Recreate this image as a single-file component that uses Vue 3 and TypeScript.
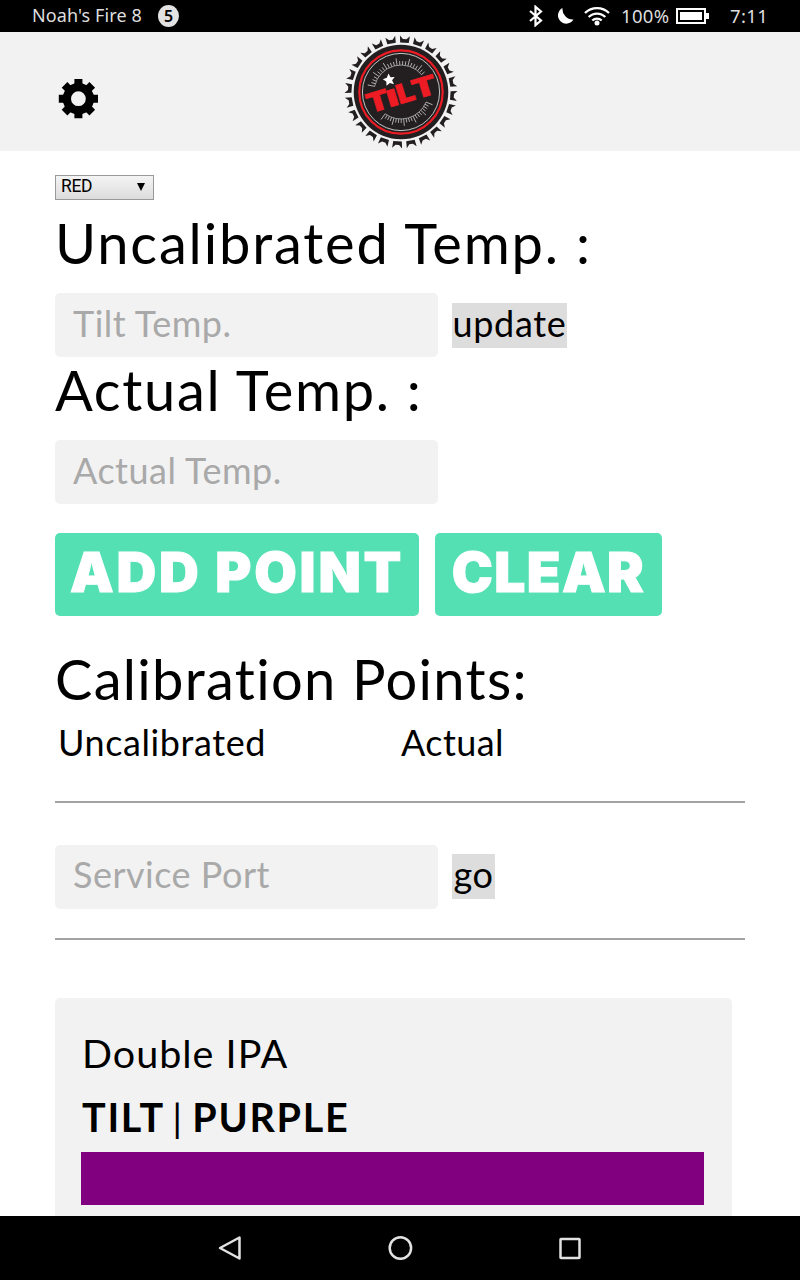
<script setup lang="ts">
import { ref } from 'vue';

interface Tick {
  angle: number;
  length: number;
}

const colors = ['RED', 'GREEN', 'BLACK', 'PURPLE', 'ORANGE', 'BLUE', 'YELLOW', 'PINK'];

const selectedColor = ref('RED');
const uncalibratedTemp = ref('');
const actualTemp = ref('');
const servicePort = ref('');

const capTeeth = Array.from({ length: 24 }, (_, i) => 4 + i * 15);
const gearTeeth = Array.from({ length: 8 }, (_, i) => i * 45);

const makeTicks = (from: number, to: number, step: number): Tick[] => {
  const ticks: Tick[] = [];
  for (let angle = from, i = 0; angle <= to; angle += step, i++) {
    ticks.push({ angle, length: i % 4 === 0 ? 7 : 4 });
  }
  return ticks;
};

const dialTicks = [...makeTicks(-78, 50, 5.8), ...makeTicks(112, 216, 5.2)];

const clearPoints = () => {
  uncalibratedTemp.value = '';
  actualTemp.value = '';
};
</script>

<template>
  <div class="screen">
    <div class="status">
      <span class="status__device">Noah's Fire 8</span>
      <span class="status__count">5</span>
      <div class="status__right">
        <svg class="status__bluetooth" width="16" height="22" viewBox="0 0 16 22">
          <path d="M2 6l11 9.500-5.500 4.700V1.800L13 6.500 2 16" fill="none" stroke="#fff" stroke-width="2.200" />
        </svg>
        <svg class="status__moon" width="17" height="18" viewBox="0 0 17 18">
          <path d="M5.500 1A8.300 8.300 0 1 0 16.500 12.500 10.500 10.500 0 0 1 5.500 1z" fill="#fff" />
        </svg>
        <svg class="status__wifi" width="26" height="20" viewBox="0 0 26 20">
          <g fill="none" stroke="#fff" stroke-width="2.300">
            <path d="M1 7a17 17 0 0 1 24 0" />
            <path d="M4.700 11a11.700 11.700 0 0 1 16.600 0" />
            <path d="M8.300 14.500a6.700 6.700 0 0 1 9.400 0" />
          </g>
          <circle cx="13" cy="17" r="2.500" fill="#fff" />
        </svg>
        <span class="status__percent">100%</span>
        <svg class="status__battery" width="33" height="16" viewBox="0 0 33 16">
          <rect x="1" y="1" width="28" height="14" fill="none" stroke="#fff" stroke-width="2" />
          <rect x="4" y="4" width="22" height="8" fill="#fff" />
          <rect x="30" y="5" width="3" height="6" fill="#fff" />
        </svg>
        <span class="status__time">7:11</span>
      </div>
    </div>

    <header class="header">
      <svg class="header__gear" width="40" height="40" viewBox="-20.400 -19.700 40 40">
        <path
          v-for="angle in gearTeeth"
          :key="angle"
          :transform="`rotate(${angle})`"
          d="M-6-12L-4-15.500V-19.600H4V-15.500L6-12z"
        />
        <circle r="11.500" fill="none" stroke="#000" stroke-width="8.200" />
      </svg>
      <svg class="header__logo" width="116" height="116" viewBox="-58 -58 116 116">
        <path
          v-for="angle in capTeeth"
          :key="angle"
          :transform="`rotate(${angle})`"
          d="M-5-56.300L-1.800-53H1.800L5-56.300L4.300-49.400H-4.300z"
          fill="#231f20"
        />
        <circle r="47.300" fill="#231f20" />
        <circle r="41.700" fill="none" stroke="#ed1c24" stroke-width="2.200" />
        <circle r="38.600" fill="none" stroke="#d8d8d8" stroke-width="0.900" />
        <g stroke="#c4c4c4" stroke-width="0.800">
          <line
            v-for="tick in dialTicks"
            :key="tick.angle"
            :transform="`rotate(${tick.angle})`"
            x1="0"
            y1="-27"
            x2="0"
            :y2="-27 - tick.length"
          />
        </g>
        <g fill="none" stroke="#c4c4c4" stroke-width="0.700">
          <path d="M-26.400-5.600A27 27 0 0 1 20.700-17.300" />
          <path d="M25 10.100A27 27 0 0 1-15.900 21.800" />
        </g>
        <g class="header__brand" transform="rotate(-17)">
          <text x="-36.500" y="11.500" textLength="23" lengthAdjust="spacingAndGlyphs">T</text>
          <text class="header__brand-small" x="-15.500" y="11.500" textLength="11" lengthAdjust="spacingAndGlyphs">I</text>
          <text x="-5" y="11.500" textLength="18" lengthAdjust="spacingAndGlyphs">L</text>
          <text x="11" y="11.500" textLength="25" lengthAdjust="spacingAndGlyphs">T</text>
        </g>
        <path
          d="M-12.500-18.500L-10.500-14.700L-6.300-15L-8.900-11.700L-7-7.800L-11.100-9L-14.500-6.300L-14.700-10.600L-18.200-12.700L-14.200-14.300z"
          fill="#fff"
        />
      </svg>
    </header>

    <main class="content">
      <div class="picker">
        <select v-model="selectedColor" class="picker__select">
          <option v-for="color in colors" :key="color">{{ color }}</option>
        </select>
        <span class="picker__arrow"></span>
      </div>

      <h2 class="title title--uncalibrated">Uncalibrated Temp. :</h2>
      <div class="row">
        <input v-model="uncalibratedTemp" class="field" placeholder="Tilt Temp." />
        <button class="link link--update">update</button>
      </div>

      <h2 class="title title--actual">Actual Temp. :</h2>
      <div class="row">
        <input v-model="actualTemp" class="field" placeholder="Actual Temp." />
      </div>

      <div class="actions">
        <button class="action action--add">ADD POINT</button>
        <button class="action action--clear" @click="clearPoints">CLEAR</button>
      </div>

      <h2 class="title title--points">Calibration Points:</h2>
      <div class="points">
        <span>Uncalibrated</span>
        <span class="points__actual">Actual</span>
      </div>

      <hr class="divider divider--top" />
      <div class="row">
        <input v-model="servicePort" class="field field--port" placeholder="Service Port" />
        <button class="link link--go">go</button>
      </div>
      <hr class="divider divider--bottom" />

      <section class="card">
        <div class="card__beer">Double IPA</div>
        <div class="card__name">TILT <span class="card__bar">|</span> PURPLE</div>
        <div class="card__color"></div>
      </section>
    </main>

    <nav class="nav">
      <svg width="24" height="28" viewBox="0 0 24 28">
        <path d="M21.500 3.500v21L2 14z" />
      </svg>
      <svg width="26" height="28" viewBox="0 0 26 28">
        <circle cx="13.400" cy="14" r="10.700" />
      </svg>
      <svg width="24" height="28" viewBox="0 0 24 28">
        <rect x="2.500" y="5" width="19" height="19" rx="0.500" />
      </svg>
    </nav>
  </div>
</template>

<style>
body {
  margin: 0;
  background: #fff;
}
</style>

<style scoped>
.screen {
  display: flex;
  flex-direction: column;
  width: 800px;
  height: 1280px;
  overflow: hidden;
  background: #fff;
  color: #000;
  font-family: Lato, sans-serif;
}

.status {
  display: flex;
  flex: none;
  align-items: center;
  box-sizing: border-box;
  height: 32px;
  padding: 0 32px;
  background: #000;
  color: #dedede;
  font-family: "Noto Sans", sans-serif;
  font-size: 18px;
  line-height: 31px;
  white-space: nowrap;
}

.status__device {
  width: 126px;
  height: 32px;
  letter-spacing: 0.1px;
}

.status__count {
  width: 21px;
  height: 22px;
  border-radius: 50%;
  background: #e2e2e2;
  color: #000;
  font-size: 16px;
  font-weight: 600;
  line-height: 22px;
  text-align: center;
}

.status__right {
  display: flex;
  align-items: center;
  margin-left: auto;
}

.status__moon {
  margin-left: 13px;
}

.status__wifi {
  margin-left: 10px;
}

.status__percent {
  width: 50px;
  height: 32px;
  margin-left: 11px;
  font-size: 18.5px;
  letter-spacing: 0.3px;
}

.status__battery {
  margin-left: 5px;
}

.status__time {
  width: 38px;
  height: 32px;
  margin-left: 21px;
  font-size: 18.5px;
  letter-spacing: 0.4px;
}

.header {
  display: flex;
  flex: none;
  align-items: flex-start;
  box-sizing: border-box;
  height: 119px;
  padding: 2px 0 0 58px;
  background: #f2f2f2;
}

.header__gear {
  margin-top: 45px;
}

.header__logo {
  margin-left: 245px;
}

.header__brand {
  fill: #ed1c24;
  stroke: #ed1c24;
  stroke-width: 0.5px;
  font-family: Inter, sans-serif;
  font-size: 27px;
  font-weight: 900;
}

.header__brand-small {
  font-size: 23px;
}

.content {
  flex: 1;
  min-height: 0;
  padding: 24px 55px 0;
  overflow: hidden;
}

.picker {
  position: relative;
  width: 99px;
  height: 25px;
}

.picker__select {
  display: block;
  box-sizing: border-box;
  width: 99px;
  height: 25px;
  padding: 0 5px 3px;
  border: 1px solid #999;
  border-radius: 0;
  background: linear-gradient(#f4f4f4, #dcdcdc);
  color: #000;
  font-family: Roboto, sans-serif;
  font-size: 17.5px;
  letter-spacing: -0.4px;
  appearance: none;
}

.picker__arrow {
  position: absolute;
  top: 8px;
  right: 9px;
  border: 4.5px solid transparent;
  border-top: 8px solid #000;
  border-bottom: 0;
  pointer-events: none;
}

.title {
  height: 60px;
  margin: 0;
  font-size: 56px;
  font-weight: 400;
  letter-spacing: 1.85px;
  line-height: 60px;
  white-space: nowrap;
}

.title--uncalibrated {
  margin: 13px 0 20px;
}

.title--actual {
  margin: 3px 0 20px;
  letter-spacing: 1.7px;
}

.title--points {
  margin-top: 33px;
  letter-spacing: 1.3px;
}

.row {
  display: flex;
  align-items: center;
  height: 64px;
}

.field {
  box-sizing: border-box;
  width: 383px;
  height: 64px;
  padding: 0 18px 4px;
  border: 0;
  border-radius: 5px;
  outline: none;
  background: #f2f2f2;
  color: #000;
  font-family: inherit;
  font-size: 36px;
  letter-spacing: 0.5px;
}

.field--port {
  padding-bottom: 6px;
}

.field::placeholder {
  color: #a9a9a9;
  opacity: 1;
}

.link {
  height: 45px;
  margin: 0 0 0 14px;
  padding: 0 0 4px;
  border: 0;
  background: #ddd;
  color: #000;
  font-family: inherit;
  font-size: 36px;
  letter-spacing: 0.7px;
  line-height: 41px;
  white-space: nowrap;
}

.link--update {
  width: 115px;
}

.link--go {
  width: 43px;
  margin-bottom: 2px;
}

.actions {
  display: flex;
  gap: 16px;
  margin-top: 29px;
}

.action {
  height: 83px;
  padding: 0 0 4px;
  border: 0;
  border-radius: 5px;
  background: #55e0b4;
  color: #fff;
  font-family: Inter, sans-serif;
  font-size: 55px;
  font-weight: 900;
  line-height: 79px;
  white-space: nowrap;
  -webkit-text-stroke: 1px #fff;
}

.action--add {
  width: 364px;
  letter-spacing: 2.8px;
}

.action--clear {
  width: 227px;
  letter-spacing: 1.4px;
}

.points {
  display: grid;
  grid-template-columns: 343px auto;
  height: 40px;
  margin-top: 13px;
  padding-left: 3px;
  font-size: 36px;
  letter-spacing: 0.6px;
  line-height: 40px;
}

.points__actual {
  letter-spacing: 0.4px;
}

.divider {
  height: 2px;
  border: 0;
  background: #a3a3a3;
}

.divider--top {
  margin: 39px 0 42px;
}

.divider--bottom {
  margin: 29px 0 58px;
}

.card {
  box-sizing: border-box;
  width: 677px;
  height: 260px;
  padding: 30px 28px 0 26px;
  border-radius: 5px;
  background: #f2f2f2;
}

.card__beer,
.card__name {
  padding-left: 1px;
  font-size: 39.5px;
  letter-spacing: 1px;
  line-height: 50px;
  white-space: nowrap;
}

.card__name {
  margin-top: 14px;
  font-weight: 700;
  letter-spacing: 1.7px;
  word-spacing: -2.8px;
}

.card__bar {
  font-weight: 400;
}

.card__color {
  height: 53px;
  margin-top: 10px;
  background: #800080;
}

.nav {
  display: flex;
  flex: none;
  align-items: center;
  justify-content: center;
  gap: 145px;
  height: 64px;
  background: #000;
}

.nav svg {
  fill: none;
  stroke: #e2e2e2;
  stroke-width: 2.5px;
  stroke-linejoin: round;
}
</style>
